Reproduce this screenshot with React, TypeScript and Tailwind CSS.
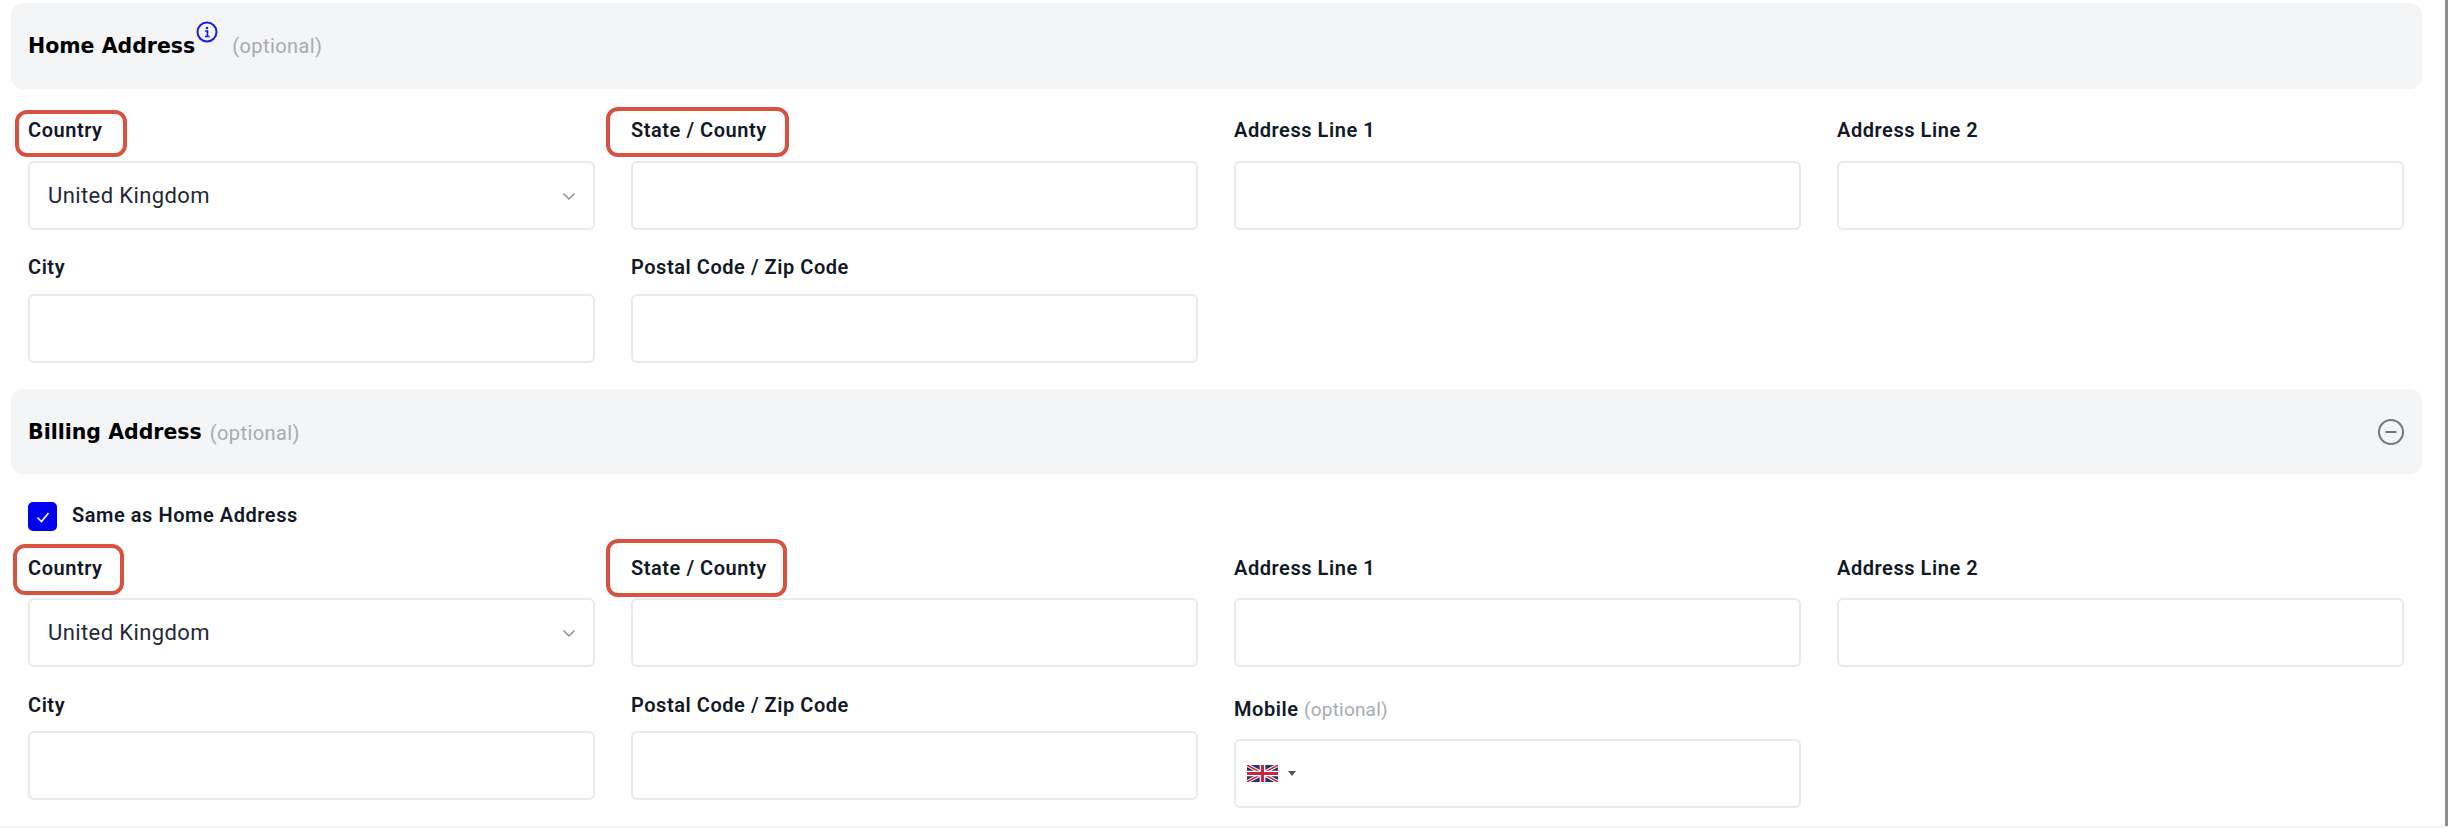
const Label = ({ children }: { children: React.ReactNode }) => (
  <div className="h-6 text-[20px] leading-6 font-semibold tracking-[0.55px] text-[#111827] whitespace-nowrap">{children}</div>
);

const Box = ({ children }: { children?: React.ReactNode }) => (
  <div className="h-[69px] rounded-md border-2 border-[#e9eaec] bg-white flex items-center justify-between px-[18px]">{children}</div>
);

const Field = ({ label, children, markClass, gapClass = "mt-[19px]" }: { label: React.ReactNode; children?: React.ReactNode; markClass?: string; gapClass?: string }) => (
  <div className="relative">
    {markClass && <div className={`absolute rounded-[12px] border-[4px] border-[#d9513f] ${markClass}`} />}
    <Label>{label}</Label>
    <div className={gapClass}><Box>{children}</Box></div>
  </div>
);

const Chevron = () => (
  <svg width="16" height="16" viewBox="0 0 16 16" fill="none" stroke="#8b9097" strokeWidth="1.5" className="mr-[-2px]"><path d="M2.5 5.5 8 11l5.5-5.5" /></svg>
);

const UK = () => (
  <svg width="31" height="17" viewBox="0 0 60 33" preserveAspectRatio="none">
    <rect width="60" height="33" fill="#2b2f6e" />
    <path d="M0 0 60 33M60 0 0 33" stroke="#fff" strokeWidth="7" />
    <path d="M0 0 60 33M60 0 0 33" stroke="#c8283f" strokeWidth="3" />
    <path d="M30 0v33M0 16.5h60" stroke="#fff" strokeWidth="11" />
    <path d="M30 0v33M0 16.5h60" stroke="#c8283f" strokeWidth="6" />
  </svg>
);

const Heading = ({ children }: { children: React.ReactNode }) => (
  <span className="text-[20.5px] font-bold text-black [font-family:'DejaVu_Sans',sans-serif]">{children}</span>
);

const Optional = ({ small }: { small?: boolean }) => (
  <span className={`font-normal text-[#a7abb2] ${small ? "text-[19px] tracking-[0.2px]" : "text-[20px] tracking-[0.4px]"}`}>(optional)</span>
);

const Country = () => (
  <>
    <span className="text-[22px] tracking-[0.4px] text-[#1f2937]">United Kingdom</span>
    <Chevron />
  </>
);

export default function App() {
  return (
    <div className="relative w-[2448px] h-[828px] overflow-hidden bg-white pt-[3px] [font-family:Roboto,sans-serif]">
      <div className="absolute right-0 top-0 bottom-0 w-[3px] bg-[#8c8c8c]" />
      <div className="absolute left-0 right-0 bottom-0 h-[2px] bg-[#f1f2f4]" />

      <div className="ml-[11px] w-[2411px] h-[86px] rounded-xl bg-[#f4f5f7] flex items-center pl-[17px]">
        <Heading>Home Address</Heading>
        <svg width="22" height="22" viewBox="0 0 22 22" fill="none" className="ml-[1px] mt-[-28px]">
          <circle cx="11" cy="11" r="9.5" stroke="#1a1aee" strokeWidth="2" />
          <circle cx="11" cy="7" r="1.3" fill="#1a1aee" />
          <path d="M9 10h2.4v5M9 15.5h4.6" stroke="#1a1aee" strokeWidth="1.7" />
        </svg>
        <span className="ml-[14px]"><Optional /></span>
      </div>

      <div className="ml-7 w-[2376px] mt-[29px] grid grid-cols-4 gap-x-9 gap-y-[25px]">
        <Field label="Country" markClass="left-[-13px] top-[-8px] w-[112px] h-[47px]">
          <Country />
        </Field>
        <Field label="State / County" markClass="left-[-25px] top-[-11px] w-[183px] h-[50px]" />
        <Field label="Address Line 1" />
        <Field label="Address Line 2" />
        <Field label="City" gapClass="mt-[15px]" />
        <Field label="Postal Code / Zip Code" gapClass="mt-[15px]" />
      </div>

      <div className="ml-[11px] mt-[26px] w-[2411px] h-[85px] rounded-xl bg-[#f4f5f7] flex items-center justify-between pl-[17px] pr-[17px]">
        <div className="flex items-center gap-[8px] pt-[2px]">
          <Heading>Billing Address</Heading>
          <Optional />
        </div>
        <svg width="28" height="28" viewBox="0 0 28 28" fill="none" stroke="#73777e" strokeWidth="2">
          <circle cx="14" cy="14" r="12" />
          <path d="M8.5 14h11" />
        </svg>
      </div>

      <div className="ml-7 mt-[28px] h-[29px] flex items-center gap-[15px]">
        <div className="w-[29px] h-[29px] rounded-[5px] bg-[#0000ee] flex items-center justify-center">
          <svg width="18" height="18" viewBox="0 0 18 18" fill="none" stroke="#fff" strokeWidth="1.6"><path d="M3.5 9.5 7.5 13.5 14.5 5" /></svg>
        </div>
        <span className="text-[20px] font-semibold tracking-[0.55px] text-[#111827] mt-[-3px]">Same as Home Address</span>
      </div>

      <div className="ml-7 w-[2376px] mt-[25px] grid grid-cols-4 gap-x-9 gap-y-[26px]">
        <Field label="Country" gapClass="mt-[18px]" markClass="left-[-15px] top-[-12px] w-[111px] h-[51px]">
          <Country />
        </Field>
        <Field label="State / County" gapClass="mt-[18px]" markClass="left-[-25px] top-[-17px] w-[181px] h-[58px]" />
        <Field label="Address Line 1" gapClass="mt-[18px]" />
        <Field label="Address Line 2" gapClass="mt-[18px]" />
        <Field label="City" gapClass="mt-[14px]" />
        <Field label="Postal Code / Zip Code" gapClass="mt-[14px]" />
        <div className="mt-[4px]">
          <Label>Mobile <Optional small /></Label>
          <div className="mt-[18px] h-[69px] rounded-md border-2 border-[#e9eaec] bg-white flex items-center pl-[11px] gap-[10px]">
            <UK />
            <span className="w-0 h-0 border-x-[4px] border-x-transparent border-t-[5px] border-t-[#555]" />
          </div>
        </div>
      </div>
    </div>
  );
}
